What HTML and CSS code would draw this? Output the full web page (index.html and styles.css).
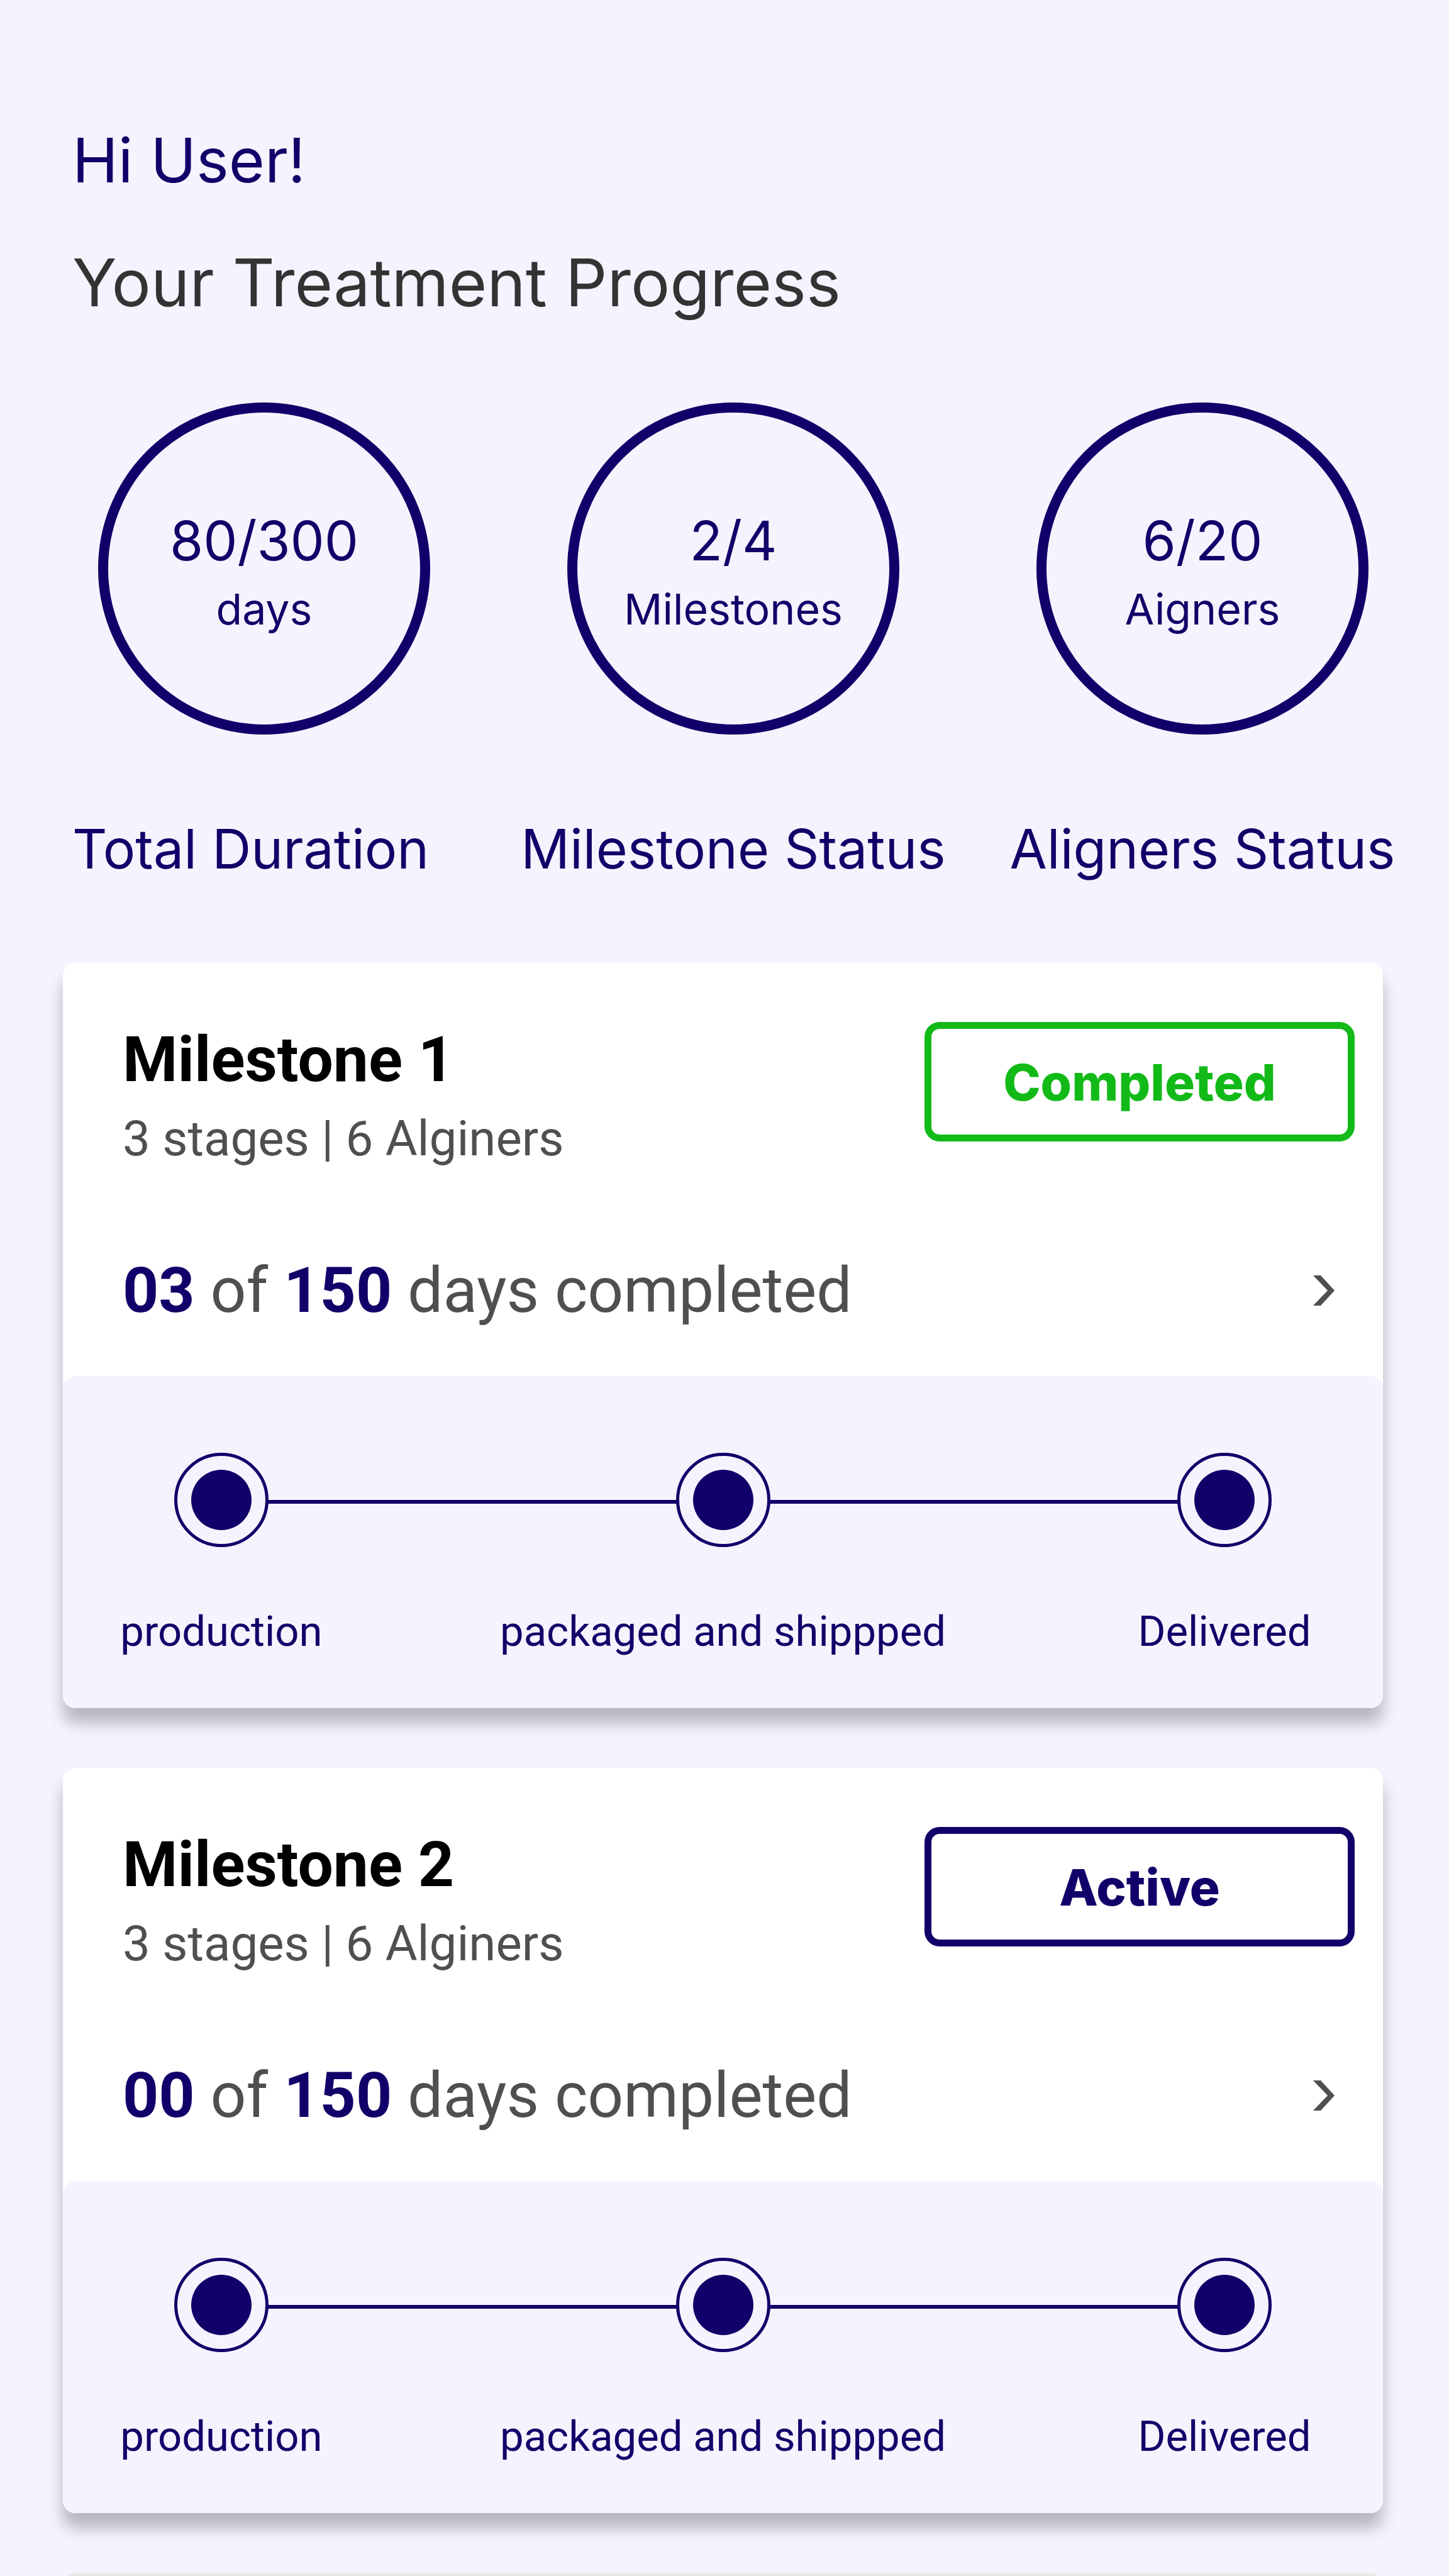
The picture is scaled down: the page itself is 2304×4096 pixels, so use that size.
FILE: index.html
```html
<!DOCTYPE html>
<html lang="en">
<head>
<meta charset="utf-8">
<meta name="viewport" content="width=device-width, initial-scale=1">
<title>Your Treatment Progress</title>
<link rel="stylesheet" href="styles.css">
</head>
<body>
<main class="screen">
  <header class="intro">
    <p class="greeting">Hi User!</p>
    <h1 class="title">Your Treatment Progress</h1>
  </header>

  <ul class="stats">
    <li class="stat">
      <div class="ring"><span class="ring-value">80/300</span><span class="ring-unit">days</span></div>
      <span class="stat-label">Total Duration</span>
    </li>
    <li class="stat">
      <div class="ring"><span class="ring-value">2/4</span><span class="ring-unit">Milestones</span></div>
      <span class="stat-label">Milestone Status</span>
    </li>
    <li class="stat">
      <div class="ring"><span class="ring-value">6/20</span><span class="ring-unit">Aigners</span></div>
      <span class="stat-label">Aligners Status</span>
    </li>
  </ul>

  <section class="cards">
    <article class="card">
      <div class="summary">
        <div class="summary-top">
          <div class="heading">
            <h2 class="name">Milestone 1</h2>
            <p class="detail">3 stages | 6 Alginers</p>
          </div>
          <span class="badge badge-completed">Completed</span>
        </div>
        <div class="summary-days">
          <p class="days"><strong>03</strong> of <strong>150</strong> days completed</p>
          <button class="open" type="button" aria-label="Open Milestone 1">
            <svg class="chevron" viewBox="0 0 34 48" aria-hidden="true"><path d="M0 0H12L34 24L12 48H0L23 24Z"/></svg>
          </button>
        </div>
      </div>
      <ol class="steps">
        <li class="step"><span class="dot"></span>production</li>
        <li class="step"><span class="dot"></span>packaged and shippped</li>
        <li class="step"><span class="dot"></span>Delivered</li>
      </ol>
    </article>

    <article class="card">
      <div class="summary">
        <div class="summary-top">
          <div class="heading">
            <h2 class="name">Milestone 2</h2>
            <p class="detail">3 stages | 6 Alginers</p>
          </div>
          <span class="badge badge-active">Active</span>
        </div>
        <div class="summary-days">
          <p class="days"><strong>00</strong> of <strong>150</strong> days completed</p>
          <button class="open" type="button" aria-label="Open Milestone 2">
            <svg class="chevron" viewBox="0 0 34 48" aria-hidden="true"><path d="M0 0H12L34 24L12 48H0L23 24Z"/></svg>
          </button>
        </div>
      </div>
      <ol class="steps">
        <li class="step"><span class="dot"></span>production</li>
        <li class="step"><span class="dot"></span>packaged and shippped</li>
        <li class="step"><span class="dot"></span>Delivered</li>
      </ol>
    </article>

    <article class="card card-upcoming"></article>
  </section>
</main>
</body>
</html>
```
FILE: styles.css
```css
:root {
  --navy: #110069;
  --page: #f5f3fe;
  --green: #12ba18;
  --grey: #4f4f4f;
  --display: Inter, "Open Sans", sans-serif;
  --body: Roboto, "Liberation Sans", sans-serif;
}

* {
  box-sizing: border-box;
  margin: 0;
  padding: 0;
}

body {
  background: var(--page);
  color: var(--navy);
  font-family: var(--body);
}

ul,
ol {
  list-style: none;
}

.screen {
  height: 100vh;
  overflow: hidden;
  padding-top: 195px;
}

.intro {
  display: flex;
  flex-direction: column;
  gap: 74px;
  padding: 0 115px;
  font-family: var(--display);
}

.greeting,
.title {
  font-weight: 400;
  line-height: 120px;
}

.greeting {
  font-size: 98px;
}

.title {
  color: #333;
  font-size: 104px;
}

/* Progress rings */
.stats {
  display: grid;
  grid-template-columns: repeat(3, 1fr);
  margin-top: 131px;
  padding: 0 19px 0 47px;
  font-family: var(--display);
}

.stat {
  display: flex;
  flex-direction: column;
  align-items: center;
  gap: 132px;
}

.ring {
  display: flex;
  flex-direction: column;
  align-items: center;
  justify-content: center;
  width: 528px;
  height: 528px;
  padding-top: 12px;
  border: 16px solid var(--navy);
  border-radius: 50%;
}

.ring-value {
  font-size: 86px;
  line-height: 116px;
}

.ring-unit {
  font-size: 68px;
  line-height: 100px;
}

.stat-label {
  font-size: 86px;
  line-height: 100px;
  white-space: nowrap;
}

/* The first caption lines up with the page heading */
.stat:first-child .stat-label {
  align-self: flex-start;
  padding-left: 68px;
}

/* Milestone cards */
.cards {
  display: flex;
  flex-direction: column;
  gap: 95px;
  margin-top: 131px;
  padding: 0 105px 0 100px;
}

.card {
  border-radius: 20px;
  background: #fff;
  box-shadow: 0 24px 24px rgba(0, 0, 0, 0.25);
}

.card-upcoming {
  min-height: 1185px;
  background: #e9e9e9;
}

.summary {
  display: flex;
  flex-direction: column;
  gap: 133px;
  padding: 94px 45px 76px 95px;
}

.summary-top,
.summary-days {
  display: flex;
  justify-content: space-between;
}

.heading {
  display: flex;
  flex-direction: column;
  gap: 18px;
}

.name {
  color: #000;
  font-size: 100px;
  font-weight: 700;
  line-height: 120px;
}

.detail {
  color: var(--grey);
  font-size: 78px;
  line-height: 96px;
}

.badge {
  display: flex;
  align-items: center;
  justify-content: center;
  width: 684px;
  height: 190px;
  border: 11px solid;
  border-radius: 24px;
  font-family: var(--display);
  font-size: 80px;
  font-weight: 800;
}

.badge-completed {
  color: var(--green);
}

.badge-active {
  color: var(--navy);
}

.summary-days {
  align-items: center;
  padding-right: 32px;
}

.days {
  color: var(--grey);
  font-size: 100px;
  line-height: 120px;
}

.days strong {
  color: var(--navy);
  font-weight: 700;
}

.open {
  display: flex;
  border: 0;
  background: none;
  cursor: pointer;
}

.chevron {
  width: 34px;
  height: 48px;
  fill: var(--grey);
}

/* Shipping steps */
.steps {
  position: relative;
  display: grid;
  grid-template-columns: 24% 1fr 24%;
  padding: 122px 0 82px;
  border-radius: 20px;
  background: var(--page);
}

.steps::before {
  content: "";
  position: absolute;
  top: 197px;
  right: 12%;
  left: 12%;
  height: 6px;
  background: var(--navy);
}

.step {
  position: relative;
  display: flex;
  flex-direction: column;
  align-items: center;
  gap: 94px;
  font-size: 67px;
  line-height: 80px;
}

.dot {
  display: flex;
  width: 150px;
  height: 150px;
  padding: 22px;
  border: 5px solid var(--navy);
  border-radius: 50%;
  background: var(--page);
}

.dot::before {
  content: "";
  flex: 1;
  border-radius: 50%;
  background: var(--navy);
}
```
